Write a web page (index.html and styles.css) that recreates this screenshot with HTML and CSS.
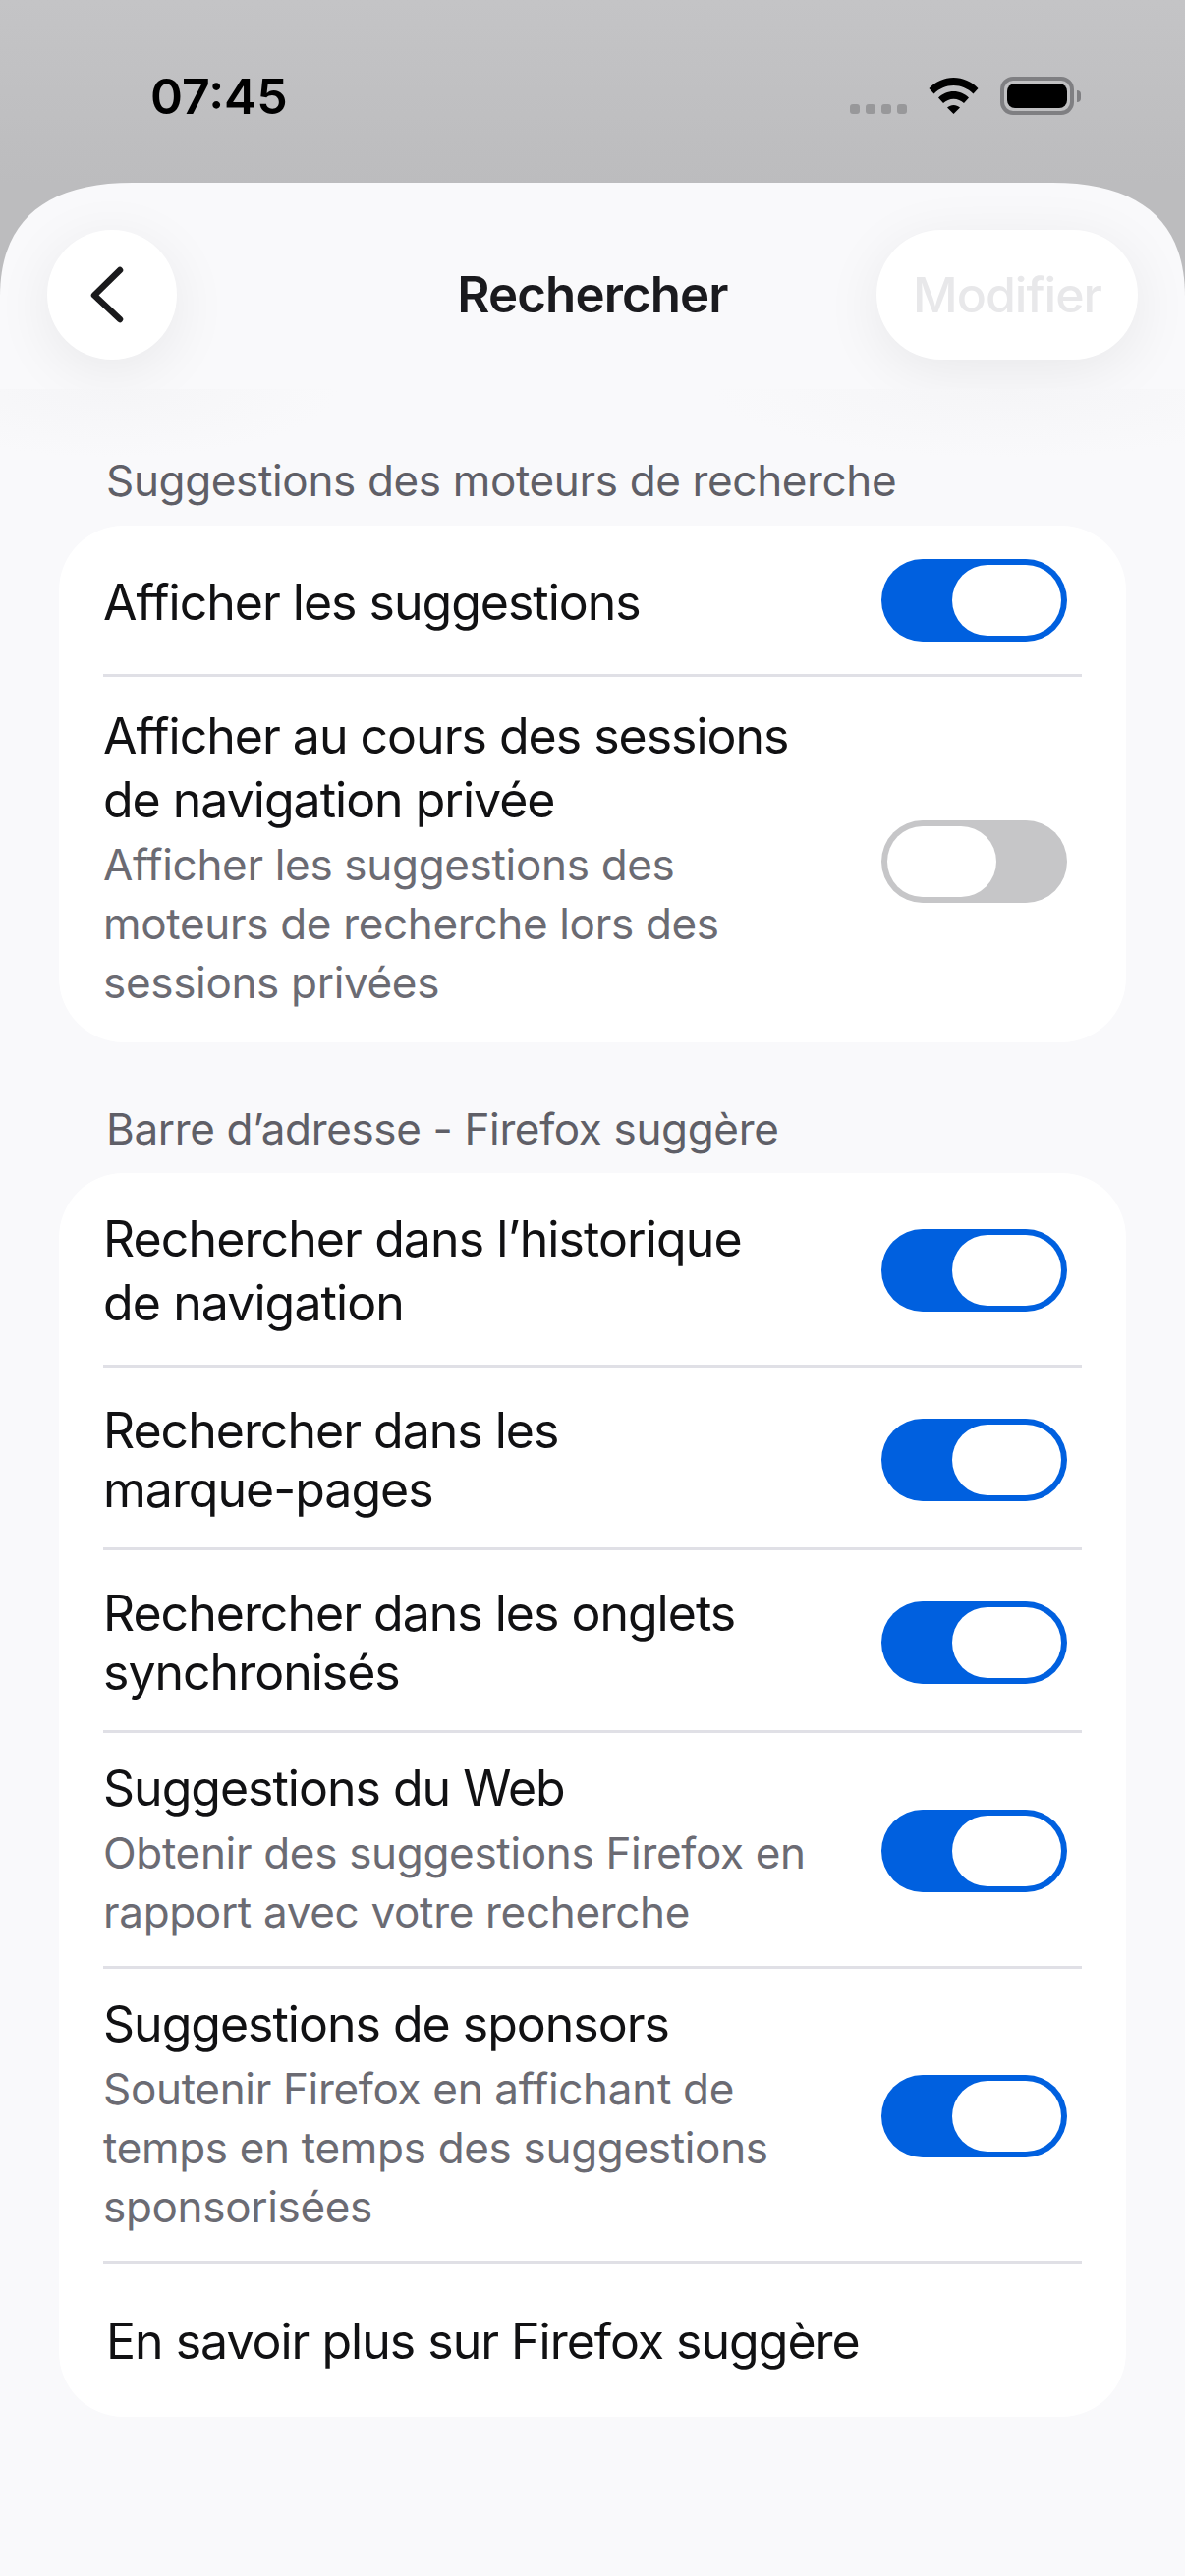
FILE: index.html
```html
<!DOCTYPE html>
<html lang="fr">
<head>
  <meta charset="UTF-8" />
  <meta name="viewport" content="width=device-width, initial-scale=1" />
  <title>Rechercher</title>
  <link rel="stylesheet" href="styles.css">
</head>
<body>
  <div class="status-bar">
    <span class="time">07:45</span>
    <div class="status-icons">
      <div class="signal"><i></i><i></i><i></i><i></i></div>
      <svg class="wifi" width="51" height="37" viewBox="0 0 51 37">
        <path d="M0.5 11C7 4 16 0 25.5 0C35 0 44 4 50.5 11L45.5 16.5C40 11 33 8 25.5 8C18 8 11 11 5.5 16.5Z"/>
        <path d="M10 20.5C14 16.5 19.5 14 25.5 14C31.5 14 37 16.5 41 20.5L36 26C33 23.5 29.5 21.8 25.5 21.8C21.5 21.8 18 23.5 15 26Z"/>
        <path d="M19 30.5C21 29 23 28 25.5 28C28 28 30 29 32 30.5L25.5 37Z"/>
      </svg>
      <div class="battery"><div class="battery-fill"></div></div>
      <div class="battery-nub"></div>
    </div>
  </div>

  <div class="sheet">
    <div class="header">
      <button class="back-btn">
        <svg width="36" height="58" viewBox="0 0 36 58">
          <path d="M32 4L6 29.500L32 54" fill="none" stroke="#1a1a1c" stroke-width="6.500" stroke-linecap="round" stroke-linejoin="round"/>
        </svg>
      </button>
      <h1 class="title">Rechercher</h1>
      <button class="edit-btn">Modifier</button>
    </div>

    <div class="content">
      <p class="section-label">Suggestions des moteurs de recherche</p>
      <div class="card">
        <div class="row row-single">
          <div class="row-text"><div class="row-title">Afficher les suggestions</div></div>
          <div class="toggle on"><div class="knob"></div></div>
        </div>
        <div class="row row-private">
          <div class="row-text">
            <div class="row-title">Afficher au cours des sessions<br>de navigation privée</div>
            <div class="row-sub">Afficher les suggestions des<br>moteurs de recherche lors des<br>sessions privées</div>
          </div>
          <div class="toggle"><div class="knob"></div></div>
        </div>
      </div>

      <p class="section-label second">Barre d’adresse - Firefox suggère</p>
      <div class="card">
        <div class="row row-history">
          <div class="row-text"><div class="row-title">Rechercher dans l’historique<br>de navigation</div></div>
          <div class="toggle on"><div class="knob"></div></div>
        </div>
        <div class="row row-double">
          <div class="row-text"><div class="row-title tight">Rechercher dans les<br>marque-pages</div></div>
          <div class="toggle on"><div class="knob"></div></div>
        </div>
        <div class="row row-double">
          <div class="row-text"><div class="row-title tight">Rechercher dans les onglets<br>synchronisés</div></div>
          <div class="toggle on"><div class="knob"></div></div>
        </div>
        <div class="row row-sub-text">
          <div class="row-text">
            <div class="row-title">Suggestions du Web</div>
            <div class="row-sub">Obtenir des suggestions Firefox en<br>rapport avec votre recherche</div>
          </div>
          <div class="toggle on"><div class="knob"></div></div>
        </div>
        <div class="row row-sub-text">
          <div class="row-text">
            <div class="row-title">Suggestions de sponsors</div>
            <div class="row-sub">Soutenir Firefox en affichant de<br>temps en temps des suggestions<br>sponsorisées</div>
          </div>
          <div class="toggle on"><div class="knob"></div></div>
        </div>
        <div class="row row-link">
          <div class="row-title">En savoir plus sur Firefox suggère</div>
        </div>
      </div>
    </div>
  </div>
</body>
</html>
```

FILE: styles.css
```css
* {
  box-sizing: border-box;
}

body {
  font-family: Inter, 'Noto Sans', sans-serif;
  margin: 0;
  width: 1206px;
  height: 2622px;
  overflow: hidden;
  background: linear-gradient(#c4c4c6, #bcbcbe 186px);
  color: #111113;
}

.status-bar {
  height: 186px;
  padding: 76px 106px 0 153px;
  display: flex;
  justify-content: space-between;
  align-items: flex-start;
}

.time {
  font-size: 50px;
  font-weight: 600;
  line-height: 44px;
  letter-spacing: 0;
  color: #000;
}

.status-icons {
  display: flex;
  align-items: flex-start;
  padding-top: 2px;
}

.signal {
  display: flex;
  gap: 6px;
  margin: 28px 22px 0 0;
}

.signal i {
  width: 10px;
  height: 10px;
  border-radius: 3px;
  background: #98989a;
}

.wifi {
  margin: 1px 22px 0 0;
}

.battery {
  width: 75px;
  height: 39px;
  border: 4px solid #7f7f82;
  border-radius: 13px;
  padding: 3px;
}

.battery-fill {
  height: 100%;
  background: #000;
  border-radius: 8px;
}

.battery-nub {
  width: 4px;
  height: 12px;
  margin: 14px 0 0 3px;
  background: #7f7f82;
  border-radius: 0 6px 6px 0;
}

/* the corners are squarer than a plain border-radius gives */
.sheet {
  height: 2436px;
  background: #f9f9fb;
  clip-path: path('M0 116C0 40 45 0 135 0H1071C1161 0 1206 40 1206 116V2436H0Z');
  overflow: hidden;
}

.header {
  height: 210px;
  padding: 48px 48px 0;
  display: grid;
  grid-template-columns: 1fr auto 1fr;
  align-items: start;
  overflow: hidden;
}

.back-btn,
.edit-btn {
  height: 132px;
  border: none;
  background: #fff;
  box-shadow: 0 12px 60px rgba(0, 0, 0, 0.07);
  font-family: inherit;
}

.back-btn {
  width: 132px;
  border-radius: 50%;
  padding: 0 12px 0 0;
  display: flex;
  align-items: center;
  justify-content: center;
}

.edit-btn {
  width: 266px;
  border-radius: 66px;
  justify-self: end;
  font-size: 50px;
  font-weight: 500;
  letter-spacing: -1px;
  color: #e8e8ea;
  padding: 0;
}

.title {
  margin: 0;
  font-size: 51px;
  font-weight: 600;
  line-height: 132px;
  letter-spacing: -0.9px;
  color: #1a1a1e;
}

.content {
  padding: 0 60px;
  background:
    radial-gradient(ellipse 230px 70px at 114px 0, #f5f5f7, transparent),
    radial-gradient(ellipse 300px 70px at 1025px 0, #f5f5f7, transparent);
}

.section-label {
  margin: 0;
  padding: 63px 0 0 48px;
  height: 139px;
  font-size: 44px;
  line-height: 60px;
  letter-spacing: -0.35px;
  color: #5f5f67;
}

.section-label.second {
  height: 133px;
  padding-top: 58px;
}

.card {
  background: #fff;
  border-radius: 66px;
  padding: 0 45px;
}

.row {
  display: flex;
  justify-content: space-between;
  align-items: center;
  border-bottom: 3px solid #e0e0e6;
  padding-right: 15px;
}

.row:last-child {
  border-bottom: none;
}

.row .toggle {
  margin-top: 4px;
}

.row-single {
  height: 154px;
}

.row-single .row-text {
  margin-top: 5px;
}

.row-single .toggle {
  margin-top: 0;
}

.row-private {
  height: 372px;
}

.row-private .row-text {
  margin-bottom: 4px;
}

.row-private .toggle {
  margin-top: 3px;
}

.row-history {
  height: 198px;
}

.row-history .row-title {
  letter-spacing: -0.9px;
}

.row-history .row-text {
  margin-top: 5px;
}

.row-history .toggle {
  margin-top: 3px;
}

.row-double {
  height: 186px;
}

.row-double .row-text {
  margin-top: 5px;
}

.row-sub-text {
  padding-top: 24px;
  padding-bottom: 25px;
}

.row-link {
  height: 156px;
  padding-left: 3px;
  padding-top: 2px;
}

.row-title {
  font-size: 50px;
  line-height: 65px;
  letter-spacing: -1px;
  color: #111113;
}

.row-title.tight {
  line-height: 60px;
}

.row-sub {
  margin-top: 3px;
  font-size: 44px;
  line-height: 60px;
  letter-spacing: -0.32px;
  color: #6b6b73;
}

.toggle {
  width: 189px;
  height: 84px;
  border-radius: 42px;
  background: #c6c6c8;
  padding: 6px;
  display: flex;
  flex-shrink: 0;
}

.toggle.on {
  background: #0060df;
  justify-content: flex-end;
}

.knob {
  width: 111px;
  height: 72px;
  border-radius: 36px;
  background: #fff;
}
```
